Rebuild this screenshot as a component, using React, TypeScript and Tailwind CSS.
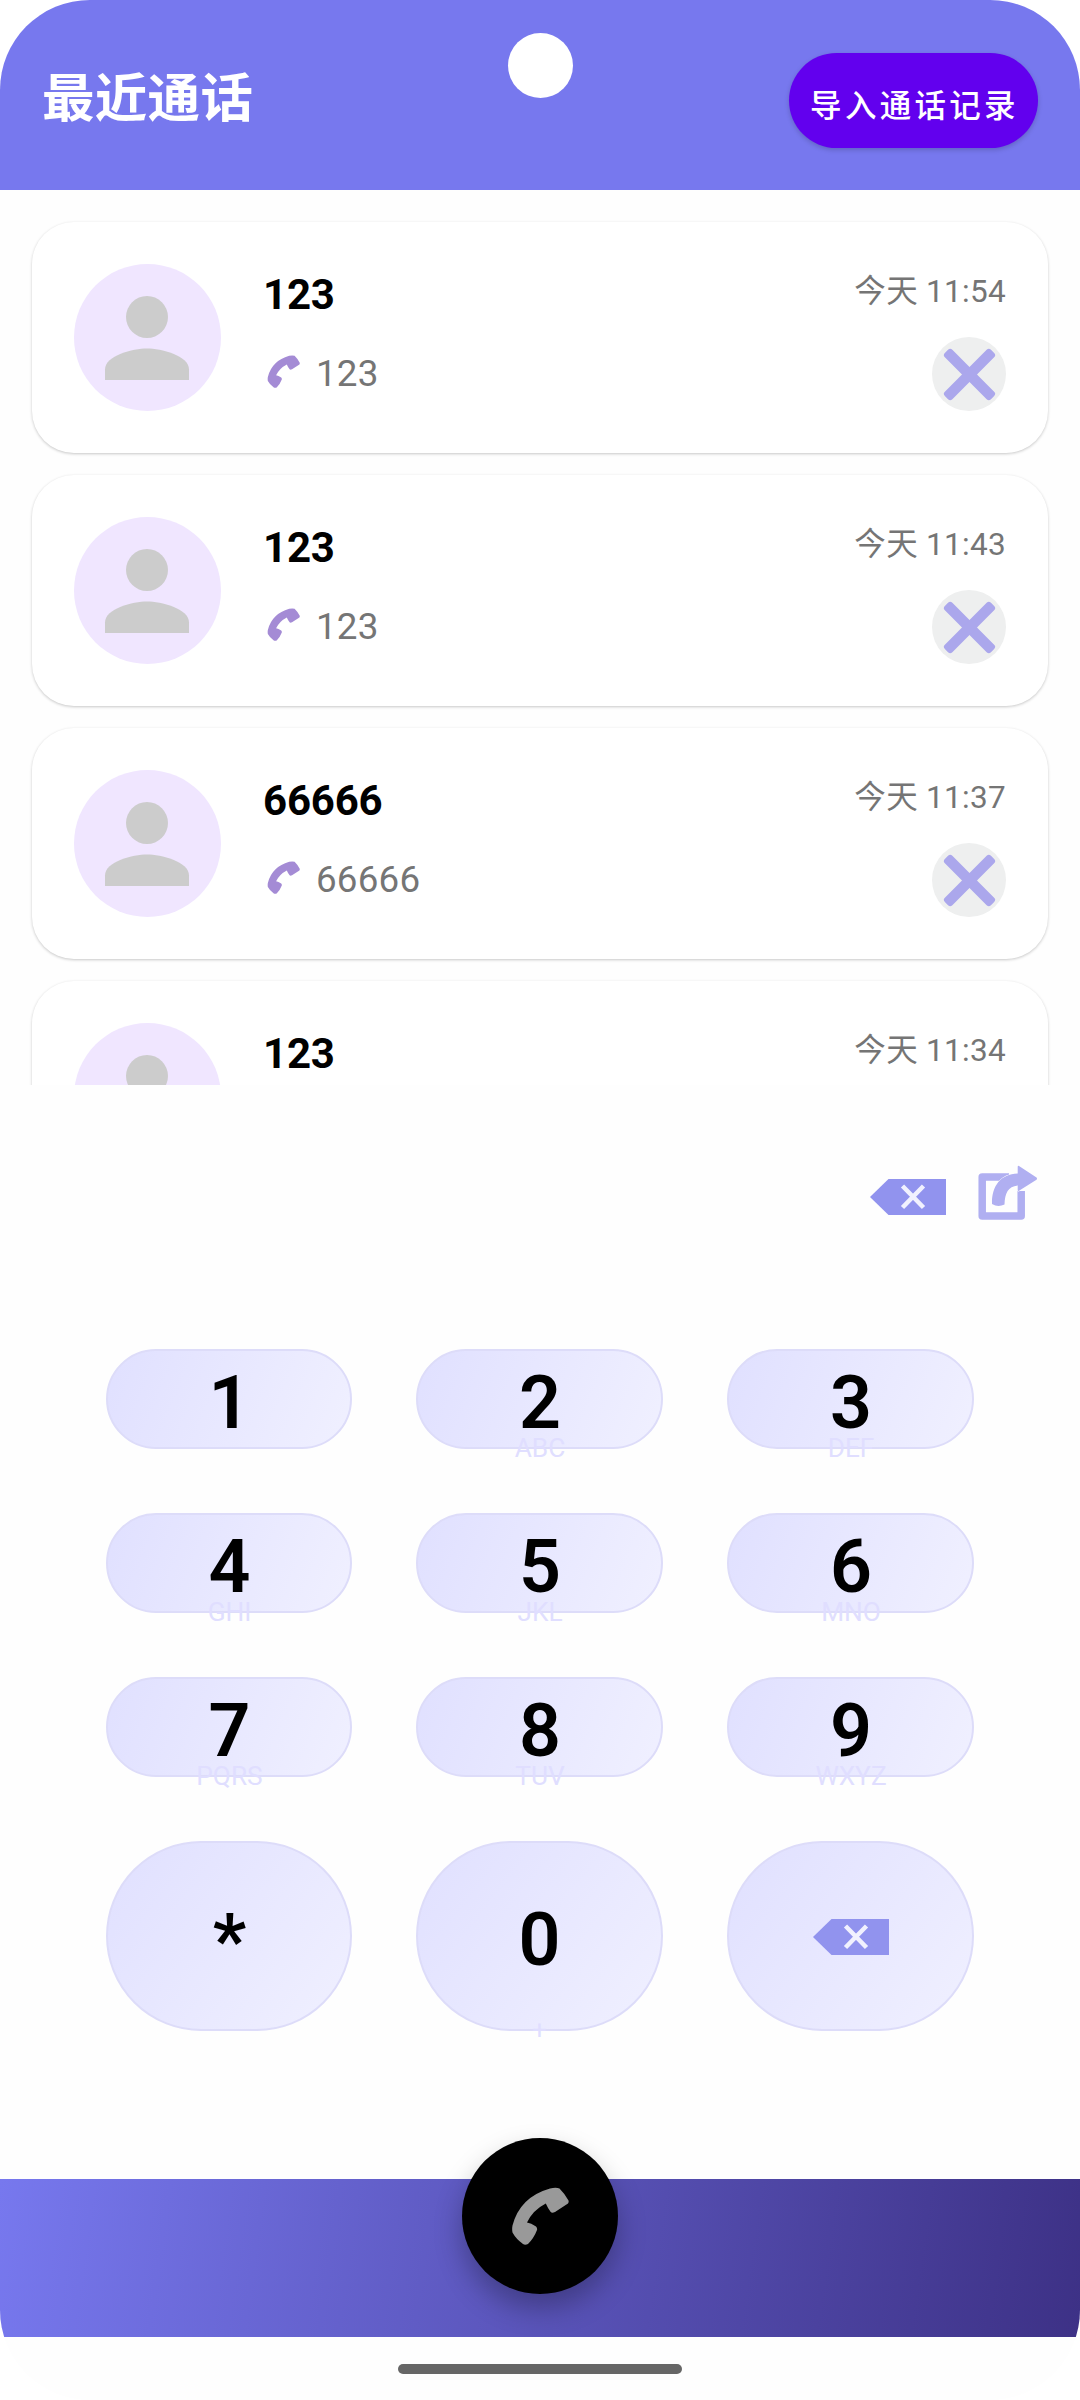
import React from "react";

const calls = [
  { name: "123", number: "123", time: "今天 11:54" },
  { name: "123", number: "123", time: "今天 11:43" },
  { name: "66666", number: "66666", time: "今天 11:37" },
  { name: "123", number: "123", time: "今天 11:34" },
];

const keys = [
  { digit: "1", letters: "" },
  { digit: "2", letters: "ABC" },
  { digit: "3", letters: "DEF" },
  { digit: "4", letters: "GHI" },
  { digit: "5", letters: "JKL" },
  { digit: "6", letters: "MNO" },
  { digit: "7", letters: "PQRS" },
  { digit: "8", letters: "TUV" },
  { digit: "9", letters: "WXYZ" },
];

function PhoneIcon({ className }: { className: string }) {
  return (
    <svg viewBox="0 0 58 58" className={className} fill="currentColor">
      <path d="M39 1.500Q45 0 48.500 1.500Q54 7 57.500 13.500Q58 15 57 16.500L44 25Q41 26.500 39.700 25Q36.500 20.500 34.800 16.500Q22 23 16 35.500Q20 36 25 39.500Q26.500 41 26 43Q23 51 17 57Q14 58.500 12 57Q5 52 1.500 45.500Q0.800 42 1.500 38.500Q9 10 39 1.500Z" />
    </svg>
  );
}

function PersonIcon() {
  return (
    <svg viewBox="0 0 24 24" className="size-[126px]" fill="#cccccc">
      <circle cx="12" cy="8" r="4" />
      <path d="M12 14c-2.67 0-8 1.34-8 4v2h16v-2c0-2.66-5.33-4-8-4z" />
    </svg>
  );
}

function BackspaceIcon() {
  return (
    <svg viewBox="0 0 76 36" className="h-9 w-[76px]">
      <path d="M0 18L18.500 0H76V36H18.500Z" fill="#9193ee" />
      <path d="M32.500 7L53.500 28.500M53.500 7L32.500 28.500" stroke="#f1f1fe" strokeWidth="4.500" />
    </svg>
  );
}

function ShareIcon() {
  return (
    <svg viewBox="0 0 60 56" className="h-14 w-[60px]" fill="#b0aff1">
      <path
        d="M31 12H4.200V51H43.200V26"
        fill="none"
        stroke="#b0aff1"
        strokeWidth="7.500"
        strokeLinejoin="round"
      />
      <path
        d="M14 39C13.500 22 22 9 39.700 8.500V1.500Q40 0.500 41 1L58.500 12.500Q59.500 13.700 58.500 14.700L41 25.700Q39.700 26.300 39.700 25V20.500C30 21.500 27 28 26.500 39.500Q20 42.500 14 39Z"
        stroke="#fefefe"
        strokeWidth="1.200"
        paintOrder="stroke"
      />
    </svg>
  );
}

function CloseIcon() {
  return (
    <svg viewBox="-26 -26 52 52" className="size-[53px]" fill="#aba7ec">
      <rect x="-32" y="-5.200" width="64" height="10.400" rx="3" transform="rotate(45)" />
      <rect x="-32" y="-5.200" width="64" height="10.400" rx="3" transform="rotate(-45)" />
    </svg>
  );
}

function CallCard({ name, number, time }: { name: string; number: string; time: string }) {
  return (
    <li className="flex h-[231px] shrink-0 rounded-[42px] bg-white px-[42px] pt-[42px] shadow-[0_1px_3px_rgba(0,0,0,0.22)]">
      <div className="flex size-[147px] items-center justify-center rounded-full bg-[#f0e6ff] pr-px">
        <PersonIcon />
      </div>
      <div className="ml-[42px] flex flex-1 flex-col">
        <p className="mt-[6px] text-[42px] leading-[50px] font-bold tracking-[-0.2px] text-black">{name}</p>
        <div className="mt-[29px] flex h-[44px] items-center">
          <PhoneIcon className="ml-1 size-[33px] text-[#a48bd5]" />
          <span className="ml-4 pt-[6px] text-[36.75px] leading-[44px] tracking-[0.2px] text-[#757575]">{number}</span>
        </div>
      </div>
      <div className="flex flex-col items-end">
        <p className="mt-[8px] text-[31.5px] leading-[40px] tracking-[0.3px] text-[#757575]">{time}</p>
        <button className="mt-[25px] flex size-[74px] items-center justify-center rounded-full bg-[#eeefef]">
          <CloseIcon />
        </button>
      </div>
    </li>
  );
}

export default function App() {
  return (
    <div className="relative flex h-[2400px] w-[1080px] flex-col overflow-hidden rounded-[90px] bg-[#fefefe] font-[Roboto,'Noto_Sans_CJK_SC',sans-serif]">
      <header className="flex h-[190px] shrink-0 justify-between bg-[#7778ee] pr-[42px] pl-[42px]">
        <h1 className="mt-[61px] text-[52.5px] leading-[76px] font-bold tracking-[0.3px] text-white">最近通话</h1>
        <button className="mt-[53px] flex h-[95px] w-[249px] justify-center rounded-full bg-[#6200ee] pt-[11px] pl-[2px] text-[31.5px] leading-[86px] font-medium tracking-[3.3px] whitespace-nowrap text-white shadow-[0_2px_5px_rgba(0,0,0,0.18)]">
          导入通话记录
        </button>
      </header>
      <div className="absolute top-[33px] left-[508px] size-[65px] rounded-full bg-white" />

      <ul className="flex h-[895px] shrink-0 flex-col gap-[22px] overflow-hidden px-8 pt-8">
        {calls.map((call) => (
          <CallCard key={call.time} {...call} />
        ))}
      </ul>

      <div className="flex h-[264px] shrink-0 items-start justify-end pt-[80px] pr-[42px]">
        <div className="mt-[14px] mr-8">
          <BackspaceIcon />
        </div>
        <ShareIcon />
      </div>

      <div className="grid grid-cols-[246px_247px_247px] gap-16 pl-[106px]">
        {keys.map((key) => (
          <button
            key={key.digit}
            className="flex h-[100px] flex-col items-center rounded-full border-2 border-[#dddcf9] bg-[linear-gradient(112deg,#e0e0ff,#f0f0ff)] pt-[7px] pl-px"
          >
            <span className="text-[73.5px] leading-[90px] font-semibold text-black">{key.digit}</span>
            <span className="-mt-[15px] text-[26.25px] leading-[30px] whitespace-nowrap text-[#e0deff]">{key.letters}</span>
          </button>
        ))}
        <button className="flex h-[190px] flex-col items-center rounded-full border-2 border-[#dddcf9] bg-[linear-gradient(128deg,#e0e0ff,#f0f0ff)] pt-[53px] pl-px">
          <span className="text-[73.5px] leading-[90px] font-bold text-black">*</span>
        </button>
        <button className="flex h-[190px] flex-col items-center rounded-full border-2 border-[#dddcf9] bg-[linear-gradient(128deg,#e0e0ff,#f0f0ff)] pt-[52px]">
          <span className="text-[73.5px] leading-[90px] font-semibold text-black">0</span>
          <span className="mt-[30px] text-[26.25px] leading-[30px] text-[#e0deff]">+</span>
        </button>
        <button className="flex h-[190px] items-center justify-center rounded-full border-2 border-[#dddcf9] bg-[linear-gradient(128deg,#e0e0ff,#f0f0ff)] pt-px">
          <BackspaceIcon />
        </button>
      </div>

      <nav className="mt-auto flex h-[158px] shrink-0 justify-center bg-[linear-gradient(98deg,#7778ee,#3d3186)]">
        <button className="-mt-[41px] flex size-[156px] items-center justify-center rounded-full bg-black shadow-[0_14px_28px_rgba(0,0,0,0.28)]">
          <PhoneIcon className="size-[58px] text-[#999999]" />
        </button>
      </nav>
      <footer className="flex h-[63px] shrink-0 justify-center bg-[#fefefe] pt-[27px]">
        <div className="h-[10px] w-[284px] rounded-full bg-[#666666]" />
      </footer>
    </div>
  );
}
